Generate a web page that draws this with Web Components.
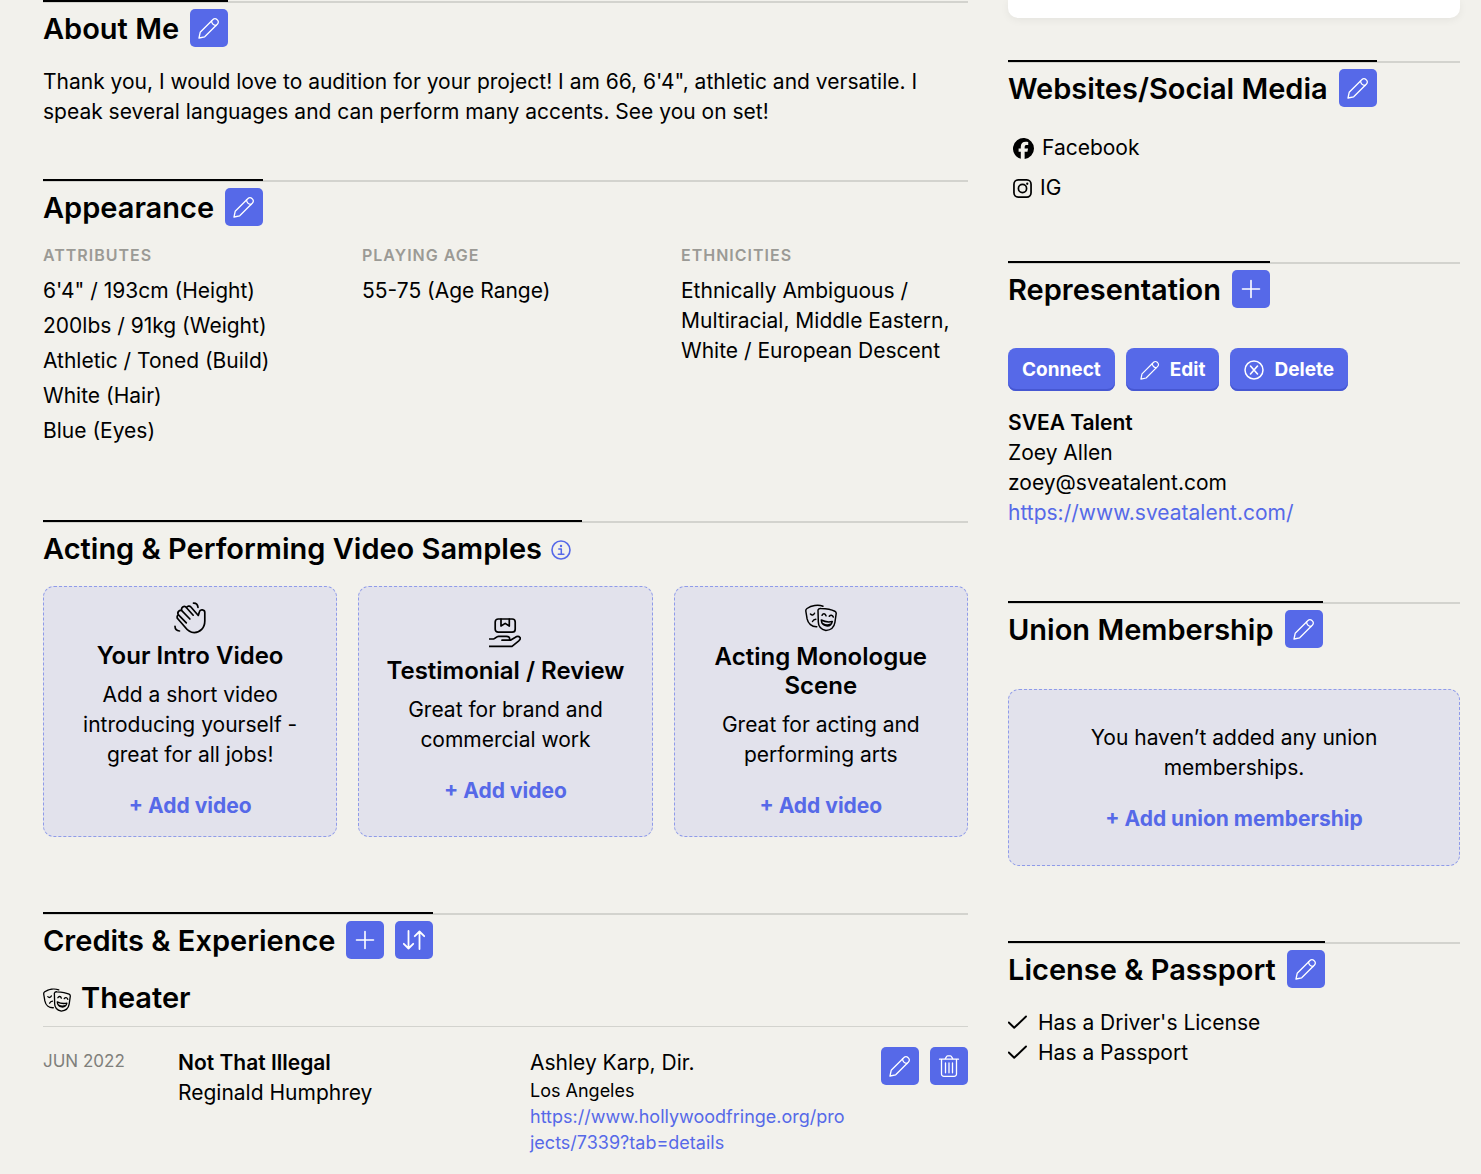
<!DOCTYPE html>
<html lang="en">
<head>
<meta charset="utf-8">
<meta name="viewport" content="width=device-width, initial-scale=1">
<title>Talent profile</title>
<style>
  :root {
    --paper: #f2f1ec;
    --ink: #000;
    --accent: #5669e8;
    --accent-deep: #4657d2;
    --rule: #d3d3ce;
    --tint: #e2e2ec;
    --muted: #9b9a95;
  }
  body {
    margin: 0;
    background: var(--paper);
    color: var(--ink);
    font: 21px/30px Inter, "Liberation Sans", sans-serif;
  }
</style>
</head>
<body>
<profile-page></profile-page>

<script>
const ICONS = {
  pencil: ['0 0 22 22', '<g stroke-width="1.3"><path d="M1 21 2.200 15.300 15 2.500a2.700 2.700 0 0 1 3.900 0l.6.6a2.700 2.700 0 0 1 0 3.900L6.700 19.800Z"/><path d="M13.500 4c.3 2.600 1.900 4.200 4.500 4.500"/></g>'],
  plus: ['0 0 22 22', '<path stroke-width="1.6" d="M11 2.500v17M2.500 11h17"/>'],
  sort: ['0 0 22 22', '<path stroke-width="1.800" d="M5.500 2v17.500M.8 14.800l4.700 4.700 4.700-4.700M16.500 20V2.500M11.800 7.200l4.700-4.700 4.700 4.700"/>'],
  trash: ['0 0 22 22', '<g stroke-width="1.300"><path d="M1.500 4.200h19M3.500 4.200V19a2.300 2.300 0 0 0 2.300 2.300h10.400a2.300 2.300 0 0 0 2.300-2.300V4.200M7 4.200l1.600-2.700q.4-.7 1.200-.7h2.400q.8 0 1.200.7L15 4.200M7.500 8v9.800M11 8v9.800M14.500 8v9.800"/></g>'],
  cross: ['0 0 20 20', '<circle cx="10" cy="10" r="9" stroke-width="1.500"/><path stroke-width="1.600" d="m6.500 6 7 8M13.500 6l-7 8"/>'],
  info: ['0 0 20 20', '<circle cx="10" cy="10" r="9" stroke-width="1.600"/><path stroke-width="1.500" d="M7.800 9h2.500v5M7.300 14.200h5.600"/><circle cx="10" cy="6" r="1.200" fill="currentColor" stroke="none"/>'],
  check: ['0 0 20 20', '<path stroke-width="1.900" d="m.8 9.500 5.400 5.300L18 3.500"/>'],
  facebook: ['0 0 24 24', '<path fill="currentColor" stroke="none" d="M24 12a12 12 0 1 0-15.100 11.600v-8H6.400V12h2.500v-1.600c0-4.100 1.900-6 5.900-6 .8 0 2.100.1 2.600.3v3.300h-1.400c-2 0-2.700.7-2.700 2.700V12h3.900l-.7 3.600h-3.200v8.300A12 12 0 0 0 24 12Z"/>'],
  instagram: ['0 0 20 20', '<rect x="1" y="1" width="18" height="18" rx="4.500" stroke-width="1.800"/><circle cx="10" cy="10" r="4.300" stroke-width="1.800"/><circle cx="15" cy="5" r="1.200" fill="currentColor" stroke="none"/>'],
  wave: ['0 0 32 32', '<g stroke-width="1.700"><path d="M24.300 13.500 16.900 5a2.600 2.600 0 0 0-4.400.8A2.700 2.700 0 0 0 8 8.800a2.700 2.700 0 0 0-3.500 4A2.500 2.500 0 0 0 4 17l6.500 7.500c2.800 3.700 5.700 6.100 9.700 6.100C26 30.600 30.800 26 30.800 19v-8.500c0-3-4.700-3.700-5.400-.7ZM12.500 5.800l6.700 7.400M8 8.800l7.900 8.200M4.500 12.800l7.800 8"/><path d="M19.500 1.200c2.600-.1 4.200 1.800 4.500 4.200M1 24.300c.1 2.500 1.800 4.600 4.500 4.700"/></g>'],
  package: ['0 0 32 32', '<g stroke-width="1.700"><rect x="6.200" y="2" width="20" height="13.200" rx="3"/><path d="M12 2v7l4.200-2.600L20.300 9V2M0 22h4.500c2-.2 2.800-2.700 5-2.700h8c1.900 0 3.700 1 3 3.900H13M21.500 23.200 26 20.500c2.400-1.600 4-1.100 5 0 .9 1.500-.3 2.500-1.200 3.300L23 29.300H0"/></g>'],
  masks: ['0 0 32 32', '<g stroke-width="1.500"><path d="M13 7c.4-1 1.400-1.700 3-1.500 5 .2 10 .9 13.800 2.700 1.100.6 1.500 1.200 1.400 2.300l-1.300 9c-.8 5-4.400 7.600-9 8-4.700-1.100-7.800-4.500-7.600-9.300L13 7Z"/><path d="M18 3.300C13 1.300 6.300 2.600 2 5.500 1 6.200.7 6.800.8 8l1.300 7.900c.9 4.600 4.700 8 9.700 7.800M5.500 11c1.400 1.500 3 1.300 4-.8M7.500 18.500c.7-1.300 1.900-2.200 3.300-2.300M17 12.300c1-2 3.200-2 4 .5M24.300 13.300c1.200-1.700 3.200-1.500 4 .8"/><path d="M16.300 17c3.200 1.700 7.200 2.300 11 1.500-.8 3-3.300 4.700-6 4.300-2.900-.5-4.800-2.800-5-5.800ZM17.800 20.600c2.500 1.500 5 1.700 7.600.7"/></g>']
};

/* Base class: renders the element's template into an open shadow root. */
class Part extends HTMLElement {
  connectedCallback() {
    if (this.shadowRoot) return;
    this.attachShadow({ mode: 'open' }).innerHTML =
      '<style>*{box-sizing:border-box}h1,h2,h3,p,ul,dl{margin:0;padding:0}ul{list-style:none}a{color:var(--accent);text-decoration:none}</style>' + this.view();
  }
  attr(name) { return this.getAttribute(name) || ''; }
}

customElements.define('ui-icon', class extends Part {
  view() {
    const [box, art] = ICONS[this.attr('name')];
    const size = this.attr('size') || 22;
    return `<style>:host{display:inline-flex;flex:none}svg{display:block;fill:none;stroke:currentColor;stroke-linecap:round;stroke-linejoin:round}</style>
      <svg viewBox="${box}" width="${size}" height="${size}" aria-hidden="true">${art}</svg>`;
  }
});

customElements.define('icon-button', class extends Part {
  view() {
    return `<style>
      :host{display:block;flex:none}
      button{display:flex;align-items:center;justify-content:center;width:38px;height:38px;padding:0;border:0;border-radius:5px;background:var(--accent);color:#fff;cursor:pointer}
      </style>
      <button type="button" aria-label="${this.attr('label')}"><ui-icon name="${this.attr('icon')}"></ui-icon></button>`;
  }
});

customElements.define('text-button', class extends Part {
  view() {
    const icon = this.attr('icon');
    return `<style>
      :host{display:block}
      button{display:flex;align-items:center;gap:10px;height:43px;padding:0 14px;border:0;border-radius:8px;background:var(--accent);box-shadow:inset 0 -2px var(--accent-deep);color:#fff;font:700 19px/24px Inter,"Liberation Sans",sans-serif;cursor:pointer}
      </style>
      <button type="button">${icon ? `<ui-icon name="${icon}" size="20"></ui-icon>` : ''}<slot></slot></button>`;
  }
});

/* Titled block: a black rule spans the title and its actions, a grey one the column. */
customElements.define('profile-section', class extends Part {
  view() {
    return `<style>
      :host{display:block}
      header{display:flex;background:linear-gradient(var(--rule),var(--rule)) 0 1px/100% 2px no-repeat}
      .title{display:flex;align-items:center;gap:11px;min-height:47px;padding-top:7px;border-top:2px solid var(--ink)}
      h2{padding-top:2px;font-size:29px;line-height:36px;font-weight:600}
      </style>
      <header><div class="title"><h2>${this.attr('heading')}</h2><slot name="action"></slot></div></header>
      <slot></slot>`;
  }
});

customElements.define('fact-column', class extends Part {
  view() {
    return `<style>
      :host{display:block}
      h3{font-size:16px;line-height:20px;font-weight:600;letter-spacing:1px;color:var(--muted);text-transform:uppercase}
      div{display:flex;flex-direction:column;gap:5px;padding-top:11px}
      </style>
      <h3>${this.attr('heading')}</h3><div><slot></slot></div>`;
  }
});

customElements.define('dashed-card', class extends Part {
  view() {
    return `<style>
      :host{display:flex;flex-direction:column;align-items:center;justify-content:center;box-sizing:border-box;padding:15px 20px;border:1px dashed #8f9be9;border-radius:11px;background:var(--tint);text-align:center}
      ui-icon{padding-bottom:7px}
      h3{padding-bottom:10px;font-size:24px;line-height:29px;font-weight:600}
      p{max-width:320px}
      a{margin-top:21px;font-weight:700}
      </style>
      ${this.attr('icon') ? `<ui-icon name="${this.attr('icon')}" size="32"></ui-icon>` : ''}
      ${this.attr('heading') ? `<h3>${this.attr('heading')}</h3>` : ''}
      <p><slot></slot></p>
      <a href="#">${this.attr('link')}</a>`;
  }
});

customElements.define('icon-line', class extends Part {
  view() {
    return `<style>
      :host{display:flex;align-items:center;gap:var(--gap,8px)}
      </style>
      <ui-icon name="${this.attr('icon')}" size="${this.attr('size') || 20}"></ui-icon><slot></slot>`;
  }
});

customElements.define('credit-row', class extends Part {
  view() {
    return `<style>
      :host{display:grid;grid-template-columns:135fr 352fr 316fr 122fr;padding-top:20px}
      time{font-size:17px;line-height:28px;color:#7f7f7b}
      .body{padding-top:1px}
      .place{display:flex;flex-direction:column;min-width:0;padding-top:1px}
      .small{font-size:18px;line-height:26px;overflow-wrap:anywhere}
      strong{font-weight:600}
      .actions{display:flex;justify-content:flex-end;gap:11px}
      </style>
      <time datetime="2022-06">JUN 2022</time>
      <div class="body"><strong>Not That Illegal</strong><p>Reginald Humphrey</p></div>
      <div class="place"><span>Ashley Karp, Dir.</span><span class="small">Los Angeles</span>
        <a class="small" href="#">https://www.hollywoodfringe.org/projects/7339?tab=details</a></div>
      <div class="actions"><icon-button icon="pencil" label="Edit credit"></icon-button><icon-button icon="trash" label="Delete credit"></icon-button></div>`;
  }
});

customElements.define('profile-page', class extends Part {
  view() {
    return `<style>
      :host{display:grid;grid-template-columns:925fr 452fr;column-gap:40px;padding:0 21px 0 43px}
      .col{min-width:0}
      .about{padding:20px 0 52px}
      .facts{display:grid;grid-template-columns:repeat(3,1fr);column-gap:32px;padding:19px 0 74px}
      .samples{display:grid;grid-template-columns:repeat(3,1fr);gap:21px;padding:19px 0 75px}
      .info{display:flex;margin-left:-2px;padding:4px 11px 0 0;border:0;background:none;color:var(--accent)}
      .group{display:flex;align-items:center;gap:10px;padding:20px 0 9px;border-bottom:1px solid var(--rule);font-size:29px;line-height:38px;font-weight:600}
      .group ui-icon{padding-top:6px}
      .panel{height:18px;border-radius:0 0 10px 10px;background:#fff;box-shadow:0 2px 8px #0000000f;margin-bottom:42px}
      .links{display:flex;flex-direction:column;gap:10px;padding:26px 0 58px 5px}
      .buttons{display:flex;gap:11px;padding:40px 0 17px}
      .agent{display:flex;flex-direction:column;padding-bottom:73px}
      .agent strong{font-weight:600}
      .union{display:block;padding:41px 0 75px}
      .union dashed-card{padding:33px 60px 31px}
      .checks{padding-top:20px;--gap:10px}
      </style>
      <main class="col">
        <profile-section heading="About Me">
          <icon-button slot="action" icon="pencil" label="Edit about me"></icon-button>
          <p class="about">Thank you, I would love to audition for your project! I am 66, 6'4", athletic and versatile. I speak several languages and can perform many accents. See you on set!</p>
        </profile-section>
        <profile-section heading="Appearance">
          <icon-button slot="action" icon="pencil" label="Edit appearance"></icon-button>
          <div class="facts">
            <fact-column heading="Attributes"><span>6'4" / 193cm (Height)</span><span>200lbs / 91kg (Weight)</span><span>Athletic / Toned (Build)</span><span>White (Hair)</span><span>Blue (Eyes)</span></fact-column>
            <fact-column heading="Playing Age"><span>55-75 (Age Range)</span></fact-column>
            <fact-column heading="Ethnicities"><span>Ethnically Ambiguous / Multiracial, Middle Eastern, White / European Descent</span></fact-column>
          </div>
        </profile-section>
        <profile-section heading="Acting &amp; Performing Video Samples">
          <button slot="action" class="info" type="button" aria-label="About video samples"><ui-icon name="info" size="20"></ui-icon></button>
          <div class="samples">
            <dashed-card icon="wave" heading="Your Intro Video" link="+ Add video">Add a short video introducing yourself - great for all jobs!</dashed-card>
            <dashed-card icon="package" heading="Testimonial / Review" link="+ Add video">Great for brand and commercial work</dashed-card>
            <dashed-card icon="masks" heading="Acting Monologue Scene" link="+ Add video">Great for acting and performing arts</dashed-card>
          </div>
        </profile-section>
        <profile-section heading="Credits &amp; Experience">
          <icon-button slot="action" icon="plus" label="Add credit"></icon-button>
          <icon-button slot="action" icon="sort" label="Reorder credits"></icon-button>
          <h3 class="group"><ui-icon name="masks" size="28"></ui-icon>Theater</h3>
          <credit-row></credit-row>
        </profile-section>
      </main>
      <aside class="col">
        <div class="panel"></div>
        <profile-section heading="Websites/Social Media">
          <icon-button slot="action" icon="pencil" label="Edit websites"></icon-button>
          <div class="links">
            <icon-line icon="facebook" size="21">Facebook</icon-line>
            <icon-line icon="instagram" size="19">IG</icon-line>
          </div>
        </profile-section>
        <profile-section heading="Representation">
          <icon-button slot="action" icon="plus" label="Add representation"></icon-button>
          <div class="buttons">
            <text-button>Connect</text-button>
            <text-button icon="pencil">Edit</text-button>
            <text-button icon="cross">Delete</text-button>
          </div>
          <div class="agent"><strong>SVEA Talent</strong><span>Zoey Allen</span><span>zoey@sveatalent.com</span><a href="#">https://www.sveatalent.com/</a></div>
        </profile-section>
        <profile-section heading="Union Membership">
          <icon-button slot="action" icon="pencil" label="Edit union membership"></icon-button>
          <div class="union"><dashed-card link="+ Add union membership">You haven’t added any union memberships.</dashed-card></div>
        </profile-section>
        <profile-section heading="License &amp; Passport">
          <icon-button slot="action" icon="pencil" label="Edit license and passport"></icon-button>
          <div class="checks">
            <icon-line icon="check">Has a Driver's License</icon-line>
            <icon-line icon="check">Has a Passport</icon-line>
          </div>
        </profile-section>
      </aside>`;
  }
});
</script>
</body>
</html>
